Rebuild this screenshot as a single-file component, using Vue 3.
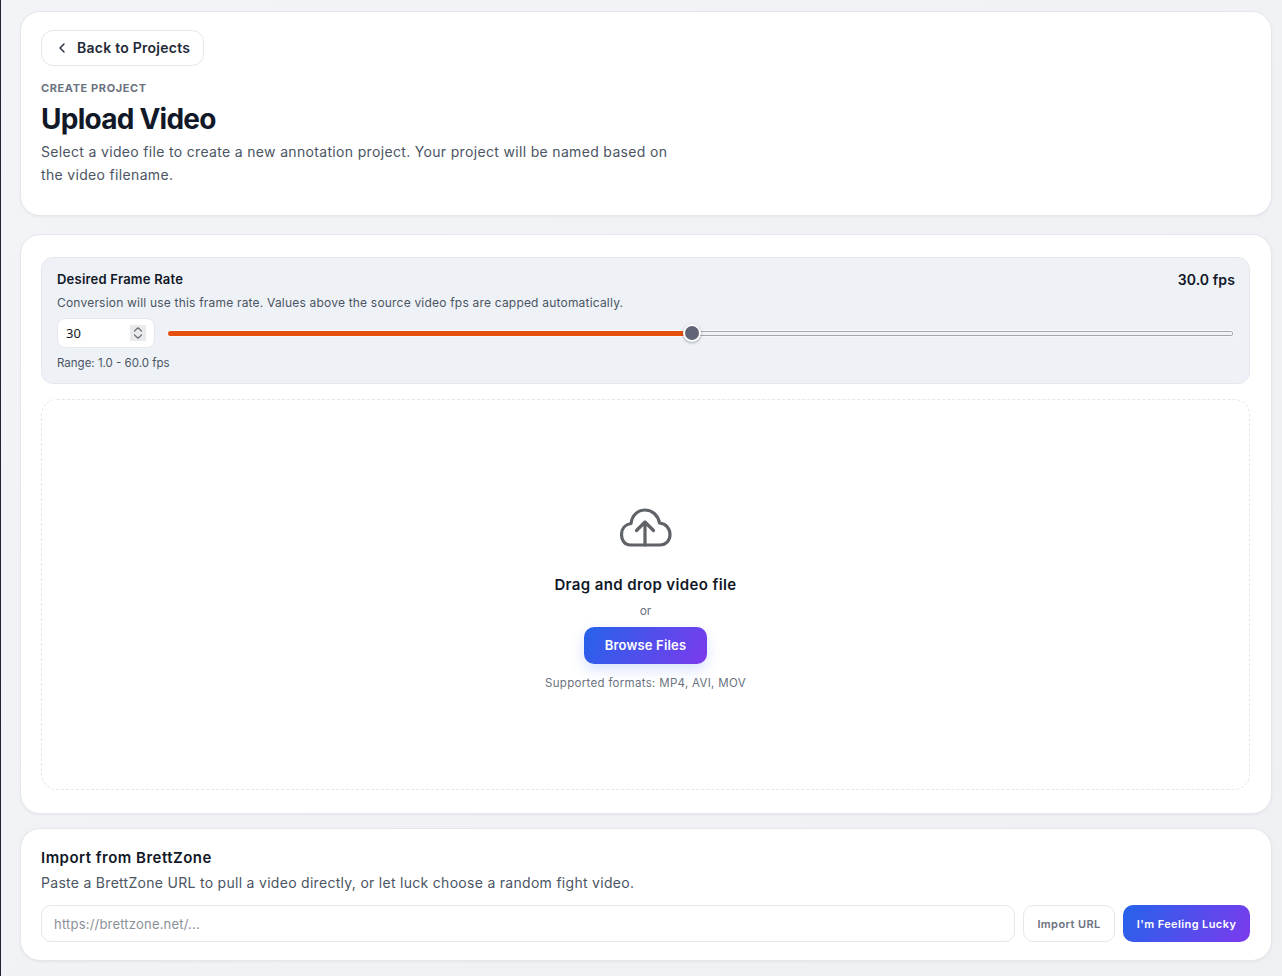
<script setup>
import { ref, computed } from 'vue'

const fps = ref(30)
const url = ref('')

// slider fill follows the value
const fillStyle = computed(() => ({ '--fill': `${((fps.value - 1) / 59) * 100}%` }))
</script>

<template>
  <div class="page">
    <section class="card header-card">
      <button class="back-btn" type="button">
        <svg width="16" height="16" viewBox="0 0 24 24" fill="none" stroke="currentColor" stroke-width="2" stroke-linecap="round" stroke-linejoin="round">
          <path d="M15 18l-6-6 6-6" />
        </svg>
        <span>Back to Projects</span>
      </button>
      <div class="eyebrow">CREATE PROJECT</div>
      <h1>Upload Video</h1>
      <p class="lead">Select a video file to create a new annotation project. Your project will be named based on the video filename.</p>
    </section>

    <section class="card upload-card">
      <div class="rate-panel">
        <div class="rate-head">
          <span class="rate-title">Desired Frame Rate</span>
          <span class="rate-value">30.0 fps</span>
        </div>
        <p class="rate-note">Conversion will use this frame rate. Values above the source video fps are capped automatically.</p>
        <div class="rate-controls">
          <div class="fps-box">
            <input v-model.number="fps" class="fps-input" type="number" min="1" max="60" />
            <span class="spinner">
              <svg width="10" height="14" viewBox="0 0 10 14" fill="none" stroke="currentColor" stroke-width="1.2" stroke-linecap="round" stroke-linejoin="round">
                <path d="M1.5 5 5 1.8 8.5 5" />
                <path d="M1.5 9 5 12.2 8.5 9" />
              </svg>
            </span>
          </div>
          <input v-model.number="fps" class="fps-slider" :style="fillStyle" type="range" min="1" max="60" step="0.1" />
        </div>
        <div class="rate-range">Range: 1.0 - 60.0 fps</div>
      </div>

      <div class="dropzone">
        <svg class="cloud" width="60" height="44" viewBox="86 10 60 44" fill="none" stroke="currentColor" stroke-width="3.2" stroke-linecap="round" stroke-linejoin="round">
          <path d="M102 50H100C94.5 50 91.5 45 91.5 39.5C91.5 34 95 29.5 101 28.5C102 20 108 15 115 15C122 15 128 20 129.5 28C136 28.5 140 33.5 140 39.5C140 45.5 136 50 130 50Z" />
          <path d="M115 50V28M106.5 35.5 115 27l8.5 8.5" />
        </svg>
        <h3>Drag and drop video file</h3>
        <div class="or">or</div>
        <button class="primary browse" type="button">Browse Files</button>
        <div class="formats">Supported formats: MP4, AVI, MOV</div>
      </div>
    </section>

    <section class="card import-card">
      <h2>Import from BrettZone</h2>
      <p class="import-note">Paste a BrettZone URL to pull a video directly, or let luck choose a random fight video.</p>
      <div class="import-row">
        <input v-model="url" class="url-input" type="text" placeholder="https://brettzone.net/..." />
        <button class="ghost" type="button">Import URL</button>
        <button class="primary lucky" type="button">I'm Feeling Lucky</button>
      </div>
    </section>
  </div>
</template>

<style>
html, body {
  margin: 0;
  background: #f0f2f5;
}
</style>

<style scoped>
.page {
  box-sizing: border-box;
  min-height: 976px;
  padding: 11px 10px 16px 19px;
  border-left: 1px solid #1f2430;
  background: linear-gradient(135deg, #f3f4f7, #eef0f3);
  display: flex;
  flex-direction: column;
  font-family: "Inter", "Liberation Sans", sans-serif;
  color: #111827;
}

.card {
  box-sizing: border-box;
  background: #fff;
  border: 1px solid #e5e7eb;
  border-radius: 20px;
  box-shadow: 0 1px 3px rgba(17, 24, 39, 0.05);
}

.header-card {
  height: 205px;
  padding: 18px 21px 18px 20px;
  margin-bottom: 18px;
}

.back-btn {
  display: flex;
  align-items: center;
  gap: 7px;
  width: 163px;
  height: 36px;
  padding: 0 0 0 12px;
  background: #fff;
  border: 1px solid #e5e7eb;
  border-radius: 12px;
  font: 600 14px "Inter", sans-serif;
  letter-spacing: 0.25px;
  color: #1f2937;
}

.back-btn span {
  padding-bottom: 2px;
}

.eyebrow {
  margin-top: 16px;
  font-size: 11px;
  line-height: 13px;
  font-weight: 700;
  letter-spacing: 0.6px;
  color: #6b7280;
}

h1 {
  margin: 5px 0 2px;
  font-size: 28px;
  line-height: 38px;
  font-weight: 700;
  color: #111827;
  letter-spacing: -0.75px;
}

.lead {
  margin: 0;
  max-width: 640px;
  font-size: 14px;
  line-height: 23px;
  letter-spacing: 0.33px;
  color: #4b5563;
}

.upload-card {
  height: 580px;
  padding: 22px 21px 22px 20px;
  margin-bottom: 14px;
}

.rate-panel {
  box-sizing: border-box;
  height: 127px;
  padding: 13px 14px 13px 15px;
  background: #eef1f6;
  border: 1px solid #e5e7eb;
  border-radius: 12px;
}

.rate-head {
  display: flex;
  justify-content: space-between;
  font-size: 13px;
  line-height: 17px;
  font-weight: 600;
}

.rate-title {
  letter-spacing: 0.22px;
}

.rate-value {
  font-size: 14px;
  letter-spacing: 0.1px;
}

.rate-note {
  margin: 6px 0 0;
  font-size: 12px;
  line-height: 17px;
  letter-spacing: 0.2px;
  color: #4b5563;
}

.rate-controls {
  display: flex;
  align-items: center;
  gap: 13px;
  margin-top: 7px;
  padding-right: 2px;
}

.fps-box {
  box-sizing: border-box;
  display: flex;
  align-items: center;
  width: 98px;
  height: 30px;
  padding: 0 8px;
  background: #fff;
  border: 1px solid #e5e7eb;
  border-radius: 8px;
}

.fps-input {
  flex: 1;
  min-width: 0;
  padding: 0;
  border: none;
  background: transparent;
  font: 13px "Noto Sans", sans-serif;
  color: #111827;
  outline: none;
  appearance: textfield;
  -moz-appearance: textfield;
}

.fps-input::-webkit-inner-spin-button {
  -webkit-appearance: none;
  margin: 0;
}

.spinner {
  display: flex;
  align-items: center;
  justify-content: center;
  width: 16px;
  height: 16px;
  background: #e9eaec;
  color: #6b7076;
}

.fps-slider {
  flex: 1;
  height: 5px;
  margin: 0;
  border-radius: 3px;
  appearance: none;
  -webkit-appearance: none;
  box-shadow: 0 0 0 1px rgba(255, 255, 255, 0.6);
  background:
    linear-gradient(90deg, #e5500f var(--fill), transparent var(--fill)),
    linear-gradient(90deg, transparent calc(100% - 1px), #a3a7ae calc(100% - 1px)),
    linear-gradient(#a3a7ae 1px, #f1f2f4 1px, #f1f2f4 4px, #a3a7ae 4px);
}

.fps-slider::-webkit-slider-thumb {
  -webkit-appearance: none;
  width: 18px;
  height: 18px;
  border-radius: 50%;
  background: #606474;
  border: 2px solid #fff;
  box-sizing: border-box;
  box-shadow: 0 1px 3px rgba(17, 24, 39, 0.35);
}

.rate-range {
  margin-top: 8px;
  font-size: 11.5px;
  line-height: 14px;
  color: #4b5563;
}

.dropzone {
  box-sizing: border-box;
  height: 391px;
  margin-top: 15px;
  padding-top: 105px;
  border: 1px dashed #e5e7eb;
  border-radius: 16px;
  display: flex;
  flex-direction: column;
  align-items: center;
}

.cloud {
  color: #5f6368;
}

.dropzone h3 {
  margin: 26px 0 0;
  font-size: 15px;
  line-height: 20px;
  font-weight: 600;
  letter-spacing: 0.38px;
}

.or {
  margin-top: 8px;
  font-size: 12px;
  line-height: 16px;
  color: #6b7280;
}

.primary {
  border: none;
  color: #fff;
  background: linear-gradient(120deg, #2563eb, #7c3aed);
  font-family: "Inter", sans-serif;
  font-weight: 600;
}

.browse {
  width: 123px;
  height: 37px;
  margin-top: 8px;
  padding: 0 0 2px;
  border-radius: 10px;
  font-size: 13px;
  letter-spacing: 0.17px;
  box-shadow: 0 6px 14px rgba(37, 99, 235, 0.18);
}

.formats {
  margin-top: 12px;
  font-size: 11.5px;
  line-height: 14px;
  letter-spacing: 0.3px;
  color: #6b7280;
}

.import-card {
  height: 133px;
  padding: 19px 21px 19px 20px;
}

.import-card h2 {
  margin: 0;
  font-size: 15px;
  line-height: 20px;
  font-weight: 600;
  letter-spacing: 0.48px;
}

.import-note {
  margin: 5px 0 0;
  font-size: 14px;
  line-height: 20px;
  letter-spacing: 0.29px;
  color: #4b5563;
}

.import-row {
  display: flex;
  gap: 8px;
  margin-top: 12px;
}

.url-input {
  box-sizing: border-box;
  flex: 1;
  height: 37px;
  padding: 0 12px;
  background: #fff;
  border: 1px solid #e5e7eb;
  border-radius: 10px;
  font: 13px "Inter", sans-serif;
  letter-spacing: 0.2px;
  outline: none;
}

.url-input::placeholder {
  color: #8b9099;
}

.ghost {
  width: 92px;
  height: 37px;
  padding: 0;
  background: #fff;
  border: 1px solid #e5e7eb;
  border-radius: 10px;
  font: 600 11px "Inter", sans-serif;
  letter-spacing: 0.4px;
  color: #6b7280;
}

.lucky {
  width: 127px;
  height: 37px;
  padding: 0;
  border-radius: 10px;
  font-size: 11px;
  letter-spacing: 0.4px;
}
</style>
